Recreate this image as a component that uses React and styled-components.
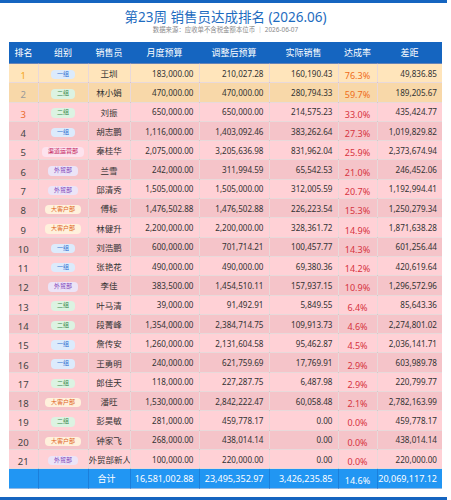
import React from "react";
import styled, { createGlobalStyle } from "styled-components";

const Global = createGlobalStyle`
  html, body { margin: 0; padding: 0; background: #fff; }
  body { font-family: "Noto Sans", "Noto Sans CJK SC", sans-serif; }
`;

const Page = styled.div`
  width: 451px;
  height: 500px;
  display: flex;
  flex-direction: column;
  align-items: center;
  overflow: hidden;
`;

const Bar = styled.div`
  align-self: flex-start;
  width: 447px;
  height: 3px;
  flex: none;
  background: #1565c0;
`;

const Header = styled.header`
  display: flex;
  flex-direction: column;
  align-items: center;
  padding-top: 6px;
  height: 33px;
  box-sizing: border-box;
  flex: none;
`;

const Title = styled.h1`
  margin: 0;
  font-size: 13.5px;
  line-height: 16px;
  font-weight: 400;
  color: #1e6cc0;
`;

const Sub = styled.div`
  margin-top: 1px;
  font-size: 6.4px;
  line-height: 8px;
  color: #8a8a8a;
`;

const Table = styled.table`
  width: 433px;
  border-collapse: collapse;
  table-layout: fixed;
  flex: none;
  margin-top: 6px;
`;

const Th = styled.th`
  background: #1565c0;
  color: #fff;
  font-weight: 400;
  font-size: 9px;
  height: 21px;
  padding: 0;
  text-align: center;
`;

const Tr = styled.tr`
  height: 19.3px;
  background: ${(p) =>
    p.$kind === "top1" ? "#ffe5bb" : p.$kind === "top2" ? "#f8d8a9" : p.$even ? "#f5c4c9" : "#ffd1d6"};
`;

const Td = styled.td`
  border: 1px solid rgba(205, 170, 172, 0.45);
  padding: 0 5px 0 0;
  font-size: 8.1px;
  color: #333;
  text-align: ${(p) => p.$align || "right"};
  white-space: nowrap;
  overflow: hidden;
  &:first-child { border-left: none; }
  &:last-child { border-right: none; }
`;

const RankTd = styled(Td)`
  text-align: center;
  padding: 5px 0 0;
  font-size: 9.5px;
  color: ${(p) => p.$color};
`;

const CenterTd = styled(Td)`
  text-align: center;
  padding: 0;
  font-size: 8.5px;
`;

const RateTd = styled(Td)`
  text-align: center;
  padding: 5px 0 0;
  font-size: 9px;
  color: ${(p) => (p.$hi ? "#ef6c1a" : "#d6343f")};
`;

const badgeColors = {
  一组: ["#dcebfc", "#2f6fd0"],
  二组: ["#dcf3e2", "#3a8a4e"],
  渠道运营部: ["#fde3ee", "#c2185b"],
  外贸部: ["#ece4f7", "#8040b8"],
  大客户部: ["#fff1dc", "#e0621a"],
};

const Badge = styled.span`
  display: inline-block;
  padding: 0 5.5px;
  height: 9.5px;
  line-height: 9.5px;
  border-radius: 4px;
  font-size: 6px;
  margin-top: 2px;
  background: ${(p) => badgeColors[p.$g][0]};
  color: ${(p) => badgeColors[p.$g][1]};
`;

const TotalRow = styled.tr`
  height: 19.3px;
  background: #2196f3;
`;

const TotalTd = styled.td`
  border: 1px solid rgba(20, 100, 190, 0.45);
  padding: 0 5px 0 0;
  font-size: 9px;
  color: #fff;
  text-align: ${(p) => p.$align || "right"};
  white-space: nowrap;
  &:first-child { border-left: none; }
  &:last-child { border-right: none; }
`;

const TotalRate = styled(TotalTd)`
  text-align: center;
  padding: 4px 0 0;
`;

const Spacer = styled.div`
  flex: 1;
`;

const rows = [
  ["一组", "王圳", "183,000.00", "210,027.28", "160,190.43", "76.3%", "49,836.85"],
  ["二组", "林小娟", "470,000.00", "470,000.00", "280,794.33", "59.7%", "189,205.67"],
  ["二组", "刘振", "650,000.00", "650,000.00", "214,575.23", "33.0%", "435,424.77"],
  ["一组", "胡志鹏", "1,116,000.00", "1,403,092.46", "383,262.64", "27.3%", "1,019,829.82"],
  ["渠道运营部", "秦桂华", "2,075,000.00", "3,205,636.98", "831,962.04", "25.9%", "2,373,674.94"],
  ["外贸部", "兰雪", "242,000.00", "311,994.59", "65,542.53", "21.0%", "246,452.06"],
  ["外贸部", "邱清秀", "1,505,000.00", "1,505,000.00", "312,005.59", "20.7%", "1,192,994.41"],
  ["大客户部", "傅标", "1,476,502.88", "1,476,502.88", "226,223.54", "15.3%", "1,250,279.34"],
  ["大客户部", "林健升", "2,200,000.00", "2,200,000.00", "328,361.72", "14.9%", "1,871,638.28"],
  ["一组", "刘浩鹏", "600,000.00", "701,714.21", "100,457.77", "14.3%", "601,256.44"],
  ["一组", "张艳花", "490,000.00", "490,000.00", "69,380.36", "14.2%", "420,619.64"],
  ["外贸部", "李佳", "383,500.00", "1,454,510.11", "157,937.15", "10.9%", "1,296,572.96"],
  ["二组", "叶马清", "39,000.00", "91,492.91", "5,849.55", "6.4%", "85,643.36"],
  ["二组", "段菁峰", "1,354,000.00", "2,384,714.75", "109,913.73", "4.6%", "2,274,801.02"],
  ["一组", "詹传安", "1,260,000.00", "2,131,604.58", "95,462.87", "4.5%", "2,036,141.71"],
  ["一组", "王勇明", "240,000.00", "621,759.69", "17,769.91", "2.9%", "603,989.78"],
  ["二组", "郎佳天", "118,000.00", "227,287.75", "6,487.98", "2.9%", "220,799.77"],
  ["大客户部", "潘旺", "1,530,000.00", "2,842,222.47", "60,058.48", "2.1%", "2,782,163.99"],
  ["二组", "彭昊敏", "281,000.00", "459,778.17", "0.00", "0.0%", "459,778.17"],
  ["大客户部", "钟家飞", "268,000.00", "438,014.14", "0.00", "0.0%", "438,014.14"],
  ["外贸部", "外贸部新人", "100,000.00", "220,000.00", "0.00", "0.0%", "220,000.00"],
];

const widths = [29, 50, 42, 69, 70, 69, 39, 65];
const heads = ["排名", "组别", "销售员", "月度预算", "调整后预算", "实际销售", "达成率", "差距"];
const rankColor = (i) => (i === 0 ? "#f5a623" : i === 1 ? "#9a9a9a" : i === 2 ? "#ea6b2c" : "#444");

export default function App() {
  return (
    <Page>
      <Global />
      <Bar />
      <Header>
        <Title>第23周 销售员达成排名 (2026.06)</Title>
        <Sub>数据来源：应收单不含税金额本位币 ｜ 2026-06-07</Sub>
      </Header>
      <Table>
        <colgroup>
          {widths.map((w, i) => (
            <col key={i} style={{ width: w }} />
          ))}
        </colgroup>
        <thead>
          <tr>
            {heads.map((h) => (
              <Th key={h}>{h}</Th>
            ))}
          </tr>
        </thead>
        <tbody>
          {rows.map((r, i) => (
            <Tr key={i} $kind={i === 0 ? "top1" : i === 1 ? "top2" : ""} $even={i % 2 === 1}>
              <RankTd $color={rankColor(i)}>{i + 1}</RankTd>
              <CenterTd>
                <Badge $g={r[0]}>{r[0]}</Badge>
              </CenterTd>
              <CenterTd>{r[1]}</CenterTd>
              <Td>{r[2]}</Td>
              <Td>{r[3]}</Td>
              <Td>{r[4]}</Td>
              <RateTd $hi={i < 2}>{r[5]}</RateTd>
              <Td>{r[6]}</Td>
            </Tr>
          ))}
          <TotalRow>
            <TotalTd />
            <TotalTd />
            <TotalTd $align="center">合计</TotalTd>
            <TotalTd>16,581,002.88</TotalTd>
            <TotalTd>23,495,352.97</TotalTd>
            <TotalTd>3,426,235.85</TotalTd>
            <TotalRate>14.6%</TotalRate>
            <TotalTd>20,069,117.12</TotalTd>
          </TotalRow>
        </tbody>
      </Table>
      <Spacer />
      <Bar />
    </Page>
  );
}
